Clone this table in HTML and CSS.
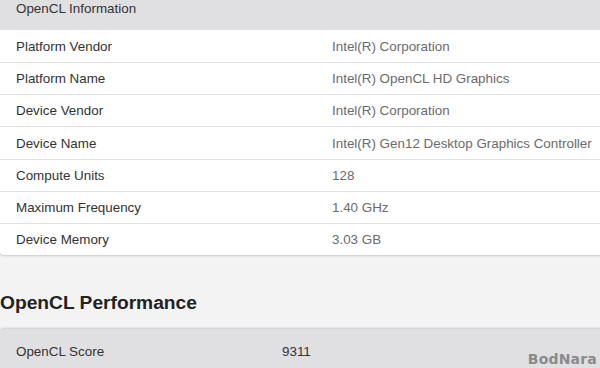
FILE: index.html
```html
<!DOCTYPE html>
<html lang="en">
<head>
<meta charset="utf-8">
<title>OpenCL Information</title>
<link rel="stylesheet" href="styles.css">
</head>
<body>
<section class="card info">
  <div class="card-head">OpenCL Information</div>
  <div class="row"><span class="label">Platform Vendor</span><span class="value">Intel(R) Corporation</span></div>
  <div class="row"><span class="label">Platform Name</span><span class="value">Intel(R) OpenCL HD Graphics</span></div>
  <div class="row"><span class="label">Device Vendor</span><span class="value">Intel(R) Corporation</span></div>
  <div class="row"><span class="label">Device Name</span><span class="value">Intel(R) Gen12 Desktop Graphics Controller</span></div>
  <div class="row"><span class="label">Compute Units</span><span class="value">128</span></div>
  <div class="row"><span class="label">Maximum Frequency</span><span class="value">1.40 GHz</span></div>
  <div class="row"><span class="label">Device Memory</span><span class="value">3.03 GB</span></div>
</section>

<h2 class="section-title">OpenCL Performance</h2>

<section class="card perf">
  <div class="score-row"><span class="score-label">OpenCL Score</span><span class="score-value">9311</span></div>
</section>

<div class="watermark">BodNara</div>
</body>
</html>
```

FILE: styles.css
```css
html, body {
  margin: 0;
  padding: 0;
}

body {
  width: 600px;
  height: 368px;
  overflow: hidden;
  position: relative;
  background: #f3f3f3;
  font-family: "Liberation Sans", Arial, sans-serif;
  font-size: 13.4px;
  color: #333;
}

.card {
  background: #fff;
  border-radius: 4px;
  box-shadow: 0 1px 2px rgba(0, 0, 0, 0.18);
  width: 606px;
}

.info {
  border-top-left-radius: 0;
  border-top-right-radius: 0;
}

.card-head {
  height: 30px;
  background: #e0e0e2;
  padding-left: 16px;
  line-height: 18px;
  color: #333;
}

.row {
  box-sizing: border-box;
  height: 32.17px;
  display: flex;
  align-items: center;
  border-top: 1px solid #e2e2e2;
}

.card-head + .row {
  border-top: none;
}

.label {
  width: 316px;
  padding-left: 16px;
  color: #333;
}

.value {
  color: #6b6b6b;
  white-space: nowrap;
}

.section-title {
  margin: 37px 0 0;
  height: 36px;
  font-size: 19.2px;
  line-height: 22px;
  font-weight: bold;
  color: #222;
}

.perf {
  background: #e0e0e2;
  border-bottom-left-radius: 0;
  border-bottom-right-radius: 0;
  box-shadow: 0 -1px 1px rgba(0, 0, 0, 0.06);
  border-top: 1px solid #d6d6d8;
}

.score-row {
  height: 44px;
  display: flex;
  align-items: center;
}

.score-label {
  width: 266px;
  padding-left: 16px;
  color: #333;
}

.score-value {
  color: #333;
}

.watermark {
  position: absolute;
  right: 3px;
  bottom: 0;
  font-family: "DejaVu Sans", sans-serif;
  font-weight: bold;
  font-size: 14px;
  letter-spacing: 0.2px;
  color: #8a8a8a;
  line-height: 17px;
}
```
